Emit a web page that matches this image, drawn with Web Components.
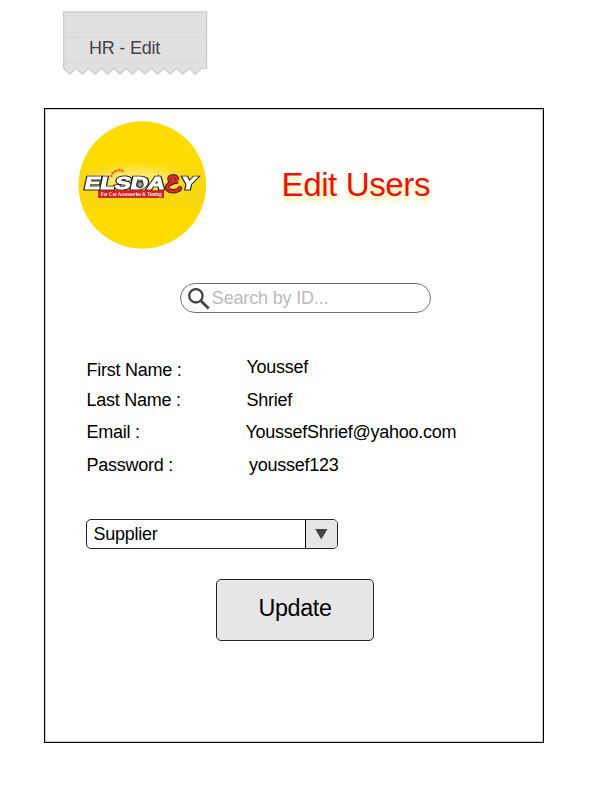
<!DOCTYPE html>
<html lang="en">
<head>
<meta charset="utf-8">
<title>HR - Edit</title>
<style>
html,body{margin:0;background:#fff}
body{width:600px;height:804px;overflow:hidden;font-family:"Liberation Sans",Arial,sans-serif;color:#000}
</style>
</head>
<body>
<edit-page></edit-page>
<script>
const define = (name, html) => customElements.define(name, class extends HTMLElement {
  constructor() {
    super();
    const t = document.createElement('template');
    t.innerHTML = html;
    this.attachShadow({ mode: 'open' }).append(t.content.cloneNode(true));
  }
});

define('paper-tag', `
<style>
:host{display:grid;width:145px;height:65px;font-size:18px;letter-spacing:-.22px;line-height:20px;color:#444}
svg,span{grid-area:1/1}
span{padding:27px 0 0 26px;white-space:nowrap}
</style>
<svg width="145" height="65" viewBox="0 0 145 65">
<path d="M.7 .9H143.6V57.3H138.6L132.2 63.2L126 57.3L119.7 63.2L113.4 57.3L107.2 63.2L100.9 57.3L94.6 63.2L88.4 57.3L82.1 63.2L75.8 57.3L69.6 63.2L63.3 57.3L57 63.2L50.8 57.3L44.5 63.2L38.2 57.3L32 63.2L25.7 57.3L19.4 63.2L13.2 57.3L7 63.2L.7 57.3Z" fill="#e0e0e0" stroke="#cbcbcb" stroke-width="1.3"/>
<path d="M1 26.3H143M1 51.3H143" stroke="#d8d8d8"/>
<path d="M13.4 2V57" stroke="#e6dacf"/>
</svg>
<span><slot></slot></span>`);

define('brand-logo', `
<style>:host{display:block;width:128px;height:130px}svg{display:block}</style>
<svg width="128" height="130" viewBox="0 0 128 130">
<defs>
<filter id="b" x="-30%" y="-60%" width="160%" height="220%"><feGaussianBlur stdDeviation="6 4"/></filter>
<filter id="s" x="-10%" y="-10%" width="120%" height="120%"><feGaussianBlur stdDeviation=".4"/></filter>
<clipPath id="c"><circle cx="64.3" cy="65" r="63.7"/></clipPath>
</defs>
<g clip-path="url(#c)">
<rect width="128" height="130" fill="#ffdc00"/>
<rect x="-4" y="48" width="136" height="38" fill="#f4d61c" opacity=".7" filter="url(#b)"/>
<ellipse cx="58" cy="60" rx="42" ry="12" fill="#fff08a" opacity=".7" filter="url(#b)"/>
</g>
<g filter="url(#s)">
<g fill="#f26a16"><circle cx="33.3" cy="56" r="1.3"/><circle cx="34.8" cy="53" r="1.5"/><circle cx="37.6" cy="51" r="1.6"/><circle cx="41" cy="50" r="1.6"/><circle cx="44.2" cy="50.7" r="1.5"/></g>
<g transform="skewX(-12)" font-family="Liberation Sans" font-weight="700" font-size="17.4" stroke-linejoin="miter">
<g fill="#222" stroke="#222" stroke-width="2.8">
<text x="20.5" y="69.4" textLength="80" lengthAdjust="spacingAndGlyphs">ELSDA</text>
<text x="117" y="69.4" textLength="15" lengthAdjust="spacingAndGlyphs">Y</text>
</g>
<g fill="#fff" stroke="#fff" stroke-width=".9">
<text x="20.5" y="69.4" textLength="80" lengthAdjust="spacingAndGlyphs">ELSDA</text>
<text x="117" y="69.4" textLength="15" lengthAdjust="spacingAndGlyphs">Y</text>
</g>
</g>
<circle cx="62" cy="64.5" r="3.3" fill="#777" stroke="#333"/><circle cx="62" cy="64.5" r="1.3" fill="#bbb"/>
<rect x="20.5" y="70.6" width="65.3" height="7" fill="#e8141f" stroke="#7e1714" stroke-width=".5"/>
<text x="22.5" y="75.9" textLength="61" lengthAdjust="spacingAndGlyphs" font-family="Liberation Serif" font-weight="700" font-size="5.2" fill="#fff">For Car Accessories &amp; Tuning</text>
<g fill="none" stroke-linecap="round">
<path d="M99 58.5C97 55 90.5 56 91.5 59.3C92.2 61.8 96 62 100 61.2C91 62.5 87.5 66 90 69.5C92.5 72.5 99.5 71.5 102 68.3" stroke="#222" stroke-width="4.4"/>
<path d="M99 58.5C97 55 90.5 56 91.5 59.3C92.2 61.8 96 62 100 61.2C91 62.5 87.5 66 90 69.5C92.5 72.5 99.5 71.5 102 68.3" stroke="#e8202a" stroke-width="2.8"/>
</g>
</g>
</svg>`);

define('page-title', `
<style>:host{display:block;font-size:33.2px;letter-spacing:-.45px;line-height:38px;color:#e8140c;text-shadow:0 5px 5px rgba(240,225,60,.6);white-space:nowrap}</style><slot></slot>`);

define('search-field', `
<style>
:host{display:flex;box-sizing:border-box;width:251px;height:30px;border:1.3px solid #707070;border-radius:15px;padding:3px 0 0 7px;font-size:18px;letter-spacing:-.16px;line-height:20px;color:#bbb;white-space:nowrap}
svg{flex:none;width:22px;height:22px;margin-top:1px}
span{margin-left:1.8px;margin-top:1px}
</style>
<svg viewBox="0 0 22 22" fill="none" stroke="#444"><circle cx="7.9" cy="7.8" r="6.7" stroke-width="2.3"/><path d="M12.8 12.8L20.7 20.5" stroke-width="2.8"/></svg>
<span><slot></slot></span>`);

define('field-row', `
<style>
:host{display:grid;grid-template-columns:var(--col,160px) 1fr;align-items:start;box-sizing:border-box;font-size:18px;letter-spacing:-.26px;line-height:20px;white-space:nowrap}
.k{padding-top:var(--kdrop,0)}
</style>
<span class="k"><slot name="label"></slot></span><span><slot></slot></span>`);

define('select-box', `
<style>
:host{display:flex;box-sizing:border-box;width:252px;height:30px;border:1.3px solid #222;border-radius:5px;overflow:hidden;font-size:18px;letter-spacing:-.24px;line-height:20px}
.t{flex:1;padding:4px 0 0 6.4px}
.a{width:31px;background:#e6e6e6;border-left:1px solid #000;display:grid;place-items:center}
</style>
<span class="t"><slot></slot></span>
<span class="a"><svg width="14" height="12" viewBox="0 0 14 12"><path d="M.2 1H12.5L6.3 11.4Z" fill="#444"/></svg></span>`);

define('action-button', `
<style>:host{display:block;box-sizing:border-box;width:158px;height:62px;border:1.3px solid #222;border-radius:5px;background:#e6e6e6;font-size:23.3px;letter-spacing:-.35px;line-height:28px;text-align:center;padding-top:14px}</style><slot></slot>`);

define('user-card', `
<style>
:host{display:flex;flex-direction:column;box-sizing:border-box;width:500px;height:635px;border:1px solid #000;box-shadow:inset 0 0 0 1px rgba(0,0,0,.2)}
header{display:flex;height:174px;padding:11px 0 0 33px;box-sizing:border-box}
.search{padding-left:135px;height:64px}
.fields{display:flex;flex-direction:column;padding-left:41.5px;height:172px}
.select{padding-left:41px;height:60px}
.action{padding-left:171px}
</style>
<header><slot name="head"></slot></header>
<div class="search"><slot name="search"></slot></div>
<div class="fields"><slot></slot></div>
<div class="select"><slot name="select"></slot></div>
<div class="action"><slot name="action"></slot></div>`);

define('edit-page', `
<style>
:host{display:flex;flex-direction:column;height:804px;box-sizing:border-box;padding:11px 0 0 44px}
paper-tag{margin:0 0 32px 19px}
page-title{margin:46px 0 0 75.5px}
.f1{height:33px;margin-top:10px;--kdrop:3px}
.f2{height:32px}
.f3{height:33px;--col:159px}
.f4{height:20px;--col:162.5px}
</style>
<paper-tag>HR - Edit</paper-tag>
<user-card>
<brand-logo slot="head"></brand-logo>
<page-title slot="head">Edit Users</page-title>
<search-field slot="search">Search by ID...</search-field>
<field-row class="f1"><span slot="label">First Name :</span>Youssef</field-row>
<field-row class="f2"><span slot="label">Last Name :</span>Shrief</field-row>
<field-row class="f3"><span slot="label">Email :</span>YoussefShrief@yahoo.com</field-row>
<field-row class="f4"><span slot="label">Password :</span>youssef123</field-row>
<select-box slot="select">Supplier</select-box>
<action-button slot="action">Update</action-button>
</user-card>`);
</script>
</body>
</html>
